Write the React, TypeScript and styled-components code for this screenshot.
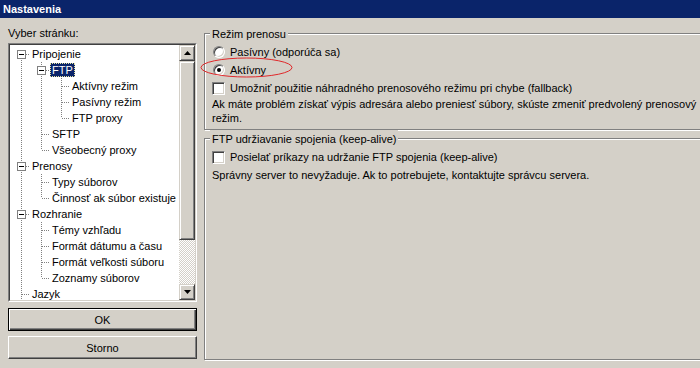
import React from 'react'
import styled, { createGlobalStyle, css } from 'styled-components'

const GlobalStyle = createGlobalStyle`
  html, body {
    margin: 0;
    padding: 0;
    overflow: hidden;
  }
  body {
    background: #d4d0c8;
    font-family: "Liberation Sans", Arial, sans-serif;
    font-size: 11px;
    color: #000;
  }
`

const Window = styled.div`
  position: relative;
  width: 703px;
  height: 368px;
  display: flex;
  flex-direction: column;
  background: #d4d0c8;
`

const TitleBar = styled.div`
  height: 18px;
  flex: none;
  background: #0a246a;
  color: #fff;
  font-weight: bold;
  line-height: 18px;
  padding-left: 3px;
`

const Body = styled.div`
  flex: 1;
  display: flex;
  gap: 7px;
  padding-left: 8px;
  min-height: 0;
`

const LeftColumn = styled.div`
  width: 189px;
  flex: none;
  display: flex;
  flex-direction: column;
`

const PageLabel = styled.div`
  box-sizing: border-box;
  height: 25px;
  padding-top: 9px;
  line-height: 13px;
`

const TreeOuter = styled.div`
  height: 259px;
  box-sizing: border-box;
  border: 1px solid;
  border-color: #808080 #fff #fff #808080;
`

const TreeInner = styled.div`
  height: 100%;
  box-sizing: border-box;
  border: 1px solid;
  border-color: #404040 #d4d0c8 #d4d0c8 #404040;
  display: flex;
`

const TreeList = styled.div`
  flex: 1;
  background: #fff;
  overflow: hidden;
  padding-top: 1px;
`

const Row = styled.div`
  display: flex;
  height: 16px;
  white-space: nowrap;
`

const dotsV = 'repeating-linear-gradient(to bottom, #808080 0 1px, transparent 1px 2px)'
const dotsH = 'repeating-linear-gradient(to right, #808080 0 1px, transparent 1px 2px)'

const Guide = styled.div<{ $line: boolean }>`
  width: 20px;
  flex: none;
  ${p => p.$line && css`
    background: ${dotsV} 11px 0 / 1px 16px no-repeat;
  `}
`

const Connector = styled.div<{ $top: boolean; $bottom: boolean }>`
  width: 20px;
  flex: none;
  display: flex;
  align-items: center;
  background:
    ${dotsH} 12px 8px / 8px 1px no-repeat,
    ${p => (p.$top ? `${dotsV} 11px 0 / 1px 8px no-repeat,` : '')}
    ${p => (p.$bottom ? `${dotsV} 11px 8px / 1px 8px no-repeat,` : '')}
    transparent;
`

const Expander = styled.span`
  box-sizing: border-box;
  width: 9px;
  height: 9px;
  margin-left: 7px;
  margin-top: 1px;
  border: 1px solid #808080;
  background: #fff;
  display: flex;
  align-items: center;
  justify-content: center;

  &::after {
    content: '';
    width: 5px;
    height: 1px;
    background: #000;
  }
`

const NodeLabel = styled.span<{ $selected?: boolean }>`
  box-sizing: border-box;
  height: 14px;
  margin-top: 1px;
  padding: 0 2px;
  line-height: 14px;
  ${p => p.$selected && css`
    background: #0a246a;
    color: #fff;
    outline: 1px dotted #e8e4a0;
    outline-offset: -1px;
  `}
`

const ScrollBar = styled.div`
  width: 16px;
  flex: none;
  display: flex;
  flex-direction: column;
`

const raised = css`
  box-sizing: border-box;
  background: #d4d0c8;
  border: 1px solid;
  border-color: #d4d0c8 #404040 #404040 #d4d0c8;
  box-shadow: inset 1px 1px #fff, inset -1px -1px #808080;
`

const ArrowButton = styled.div`
  ${raised};
  height: 16px;
  display: flex;
  align-items: center;
  justify-content: center;
`

const Thumb = styled.div`
  ${raised};
  height: 179px;
`

const Track = styled.div`
  flex: 1;
  background: repeating-conic-gradient(#fff 0 25%, #d4d0c8 0 50%) 0 0 / 2px 2px;
`

const PushButton = styled.div<{ $default?: boolean }>`
  box-sizing: border-box;
  height: 23px;
  display: flex;
  align-items: center;
  justify-content: center;
  border: 1px solid;
  border-color: #fff #404040 #404040 #fff;
  box-shadow: inset -1px -1px #808080, inset 1px 1px #d4d0c8;
  ${p => p.$default && css`
    border-color: #000;
    box-shadow: inset 1px 1px #fff, inset -1px -1px #404040, inset -2px -2px #808080;
  `}
`

const ButtonStack = styled.div`
  display: flex;
  flex-direction: column;
  gap: 5px;
  margin-top: 6px;
`

const RightPane = styled.div`
  flex: 1;
  display: flex;
  flex-direction: column;
  padding: 7px 0 8px;
  min-width: 0;
`

const Group = styled.fieldset<{ $grow?: boolean }>`
  margin: 0;
  padding: 2px 8px 4px 7px;
  min-width: 0;
  border: 1px solid #808080;
  box-shadow: 1px 1px 0 #fff, inset 1px 1px 0 #fff;
  ${p => p.$grow && css`flex: 1;`}
`

const Legend = styled.legend`
  margin-left: -2px;
  padding: 3px 2px 0;
  line-height: 13px;
  background: #d4d0c8;
`

const OptionRow = styled.div`
  display: flex;
  align-items: center;
  gap: 5px;
  height: 18px;
  white-space: nowrap;
`

const sunken = css`
  box-sizing: border-box;
  flex: none;
  background: #fff;
  border: 1px solid;
  border-color: #808080 #fff #fff #808080;
  box-shadow: inset 1px 1px #404040, inset -1px -1px #d4d0c8;
`

const Radio = styled.span<{ $checked?: boolean }>`
  ${sunken};
  width: 12px;
  height: 12px;
  margin-left: 1px;
  border-radius: 50%;
  display: flex;
  align-items: center;
  justify-content: center;
  ${p => p.$checked && css`
    &::after {
      content: '';
      width: 4px;
      height: 4px;
      border-radius: 50%;
      background: #000;
    }
  `}
`

const Checkbox = styled.span`
  ${sunken};
  width: 13px;
  height: 13px;
`

const Note = styled.div<{ $gap?: number }>`
  line-height: 14px;
  white-space: nowrap;
  margin-top: ${p => p.$gap ?? 0}px;
`

const Annotation = styled.svg`
  position: absolute;
  left: 200px;
  top: 57px;
  pointer-events: none;
`

type Node = {
  label: string
  guides: boolean[]
  top: boolean
  bottom: boolean
  expander?: boolean
  selected?: boolean
}

const nodes: Node[] = [
  { label: 'Pripojenie', guides: [], top: false, bottom: true, expander: true },
  { label: 'FTP', guides: [true], top: true, bottom: true, expander: true, selected: true },
  { label: 'Aktívny režim', guides: [true, true], top: true, bottom: true },
  { label: 'Pasívny režim', guides: [true, true], top: true, bottom: true },
  { label: 'FTP proxy', guides: [true, true], top: true, bottom: false },
  { label: 'SFTP', guides: [true], top: true, bottom: true },
  { label: 'Všeobecný proxy', guides: [true], top: true, bottom: false },
  { label: 'Prenosy', guides: [], top: true, bottom: true, expander: true },
  { label: 'Typy súborov', guides: [true], top: true, bottom: true },
  { label: 'Činnosť ak súbor existuje', guides: [true], top: true, bottom: false },
  { label: 'Rozhranie', guides: [], top: true, bottom: true, expander: true },
  { label: 'Témy vzhľadu', guides: [true], top: true, bottom: true },
  { label: 'Formát dátumu a času', guides: [true], top: true, bottom: true },
  { label: 'Formát veľkosti súboru', guides: [true], top: true, bottom: true },
  { label: 'Zoznamy súborov', guides: [true], top: true, bottom: false },
  { label: 'Jazyk', guides: [], top: true, bottom: true },
]

function Triangle({ up }: { up?: boolean }) {
  return (
    <svg width="7" height="4" viewBox="0 0 7 4">
      <path d={up ? 'M3.5 0 L7 4 L0 4 Z' : 'M0 0 L7 0 L3.5 4 Z'} fill="#000" />
    </svg>
  )
}

export default function App() {
  return (
    <Window>
      <GlobalStyle />
      <TitleBar>Nastavenia</TitleBar>
      <Body>
        <LeftColumn>
          <PageLabel>Vyber stránku:</PageLabel>
          <TreeOuter>
            <TreeInner>
              <TreeList>
                {nodes.map(n => (
                  <Row key={n.label}>
                    {n.guides.map((g, i) => (
                      <Guide key={i} $line={g} />
                    ))}
                    <Connector $top={n.top} $bottom={n.bottom}>
                      {n.expander && <Expander />}
                    </Connector>
                    <NodeLabel $selected={n.selected}>{n.label}</NodeLabel>
                  </Row>
                ))}
              </TreeList>
              <ScrollBar>
                <ArrowButton><Triangle up /></ArrowButton>
                <Thumb />
                <Track />
                <ArrowButton><Triangle /></ArrowButton>
              </ScrollBar>
            </TreeInner>
          </TreeOuter>
          <ButtonStack>
            <PushButton $default>OK</PushButton>
            <PushButton>Storno</PushButton>
          </ButtonStack>
        </LeftColumn>

        <RightPane>
          <Group>
            <Legend>Režim prenosu</Legend>
            <OptionRow><Radio />Pasívny (odporúča sa)</OptionRow>
            <OptionRow><Radio $checked />Aktívny</OptionRow>
            <OptionRow><Checkbox />Umožniť použitie náhradného prenosového režimu pri chybe (fallback)</OptionRow>
            <Note>
              Ak máte problém získať výpis adresára alebo preniesť súbory, skúste zmeniť predvolený prenosový
              <br />
              režim.
            </Note>
          </Group>
          <Group $grow>
            <Legend>FTP udržiavanie spojenia (keep-alive)</Legend>
            <OptionRow><Checkbox />Posielať príkazy na udržanie FTP spojenia (keep-alive)</OptionRow>
            <Note $gap={2}>Správny server to nevyžaduje. Ak to potrebujete, kontaktujte správcu servera.</Note>
          </Group>
        </RightPane>
      </Body>

      <Annotation width="93" height="21" viewBox="0 0 93 21">
        <ellipse cx="46.5" cy="10.5" rx="45.5" ry="9.5" fill="none" stroke="#e0282a" strokeWidth="1" />
      </Annotation>
    </Window>
  )
}
